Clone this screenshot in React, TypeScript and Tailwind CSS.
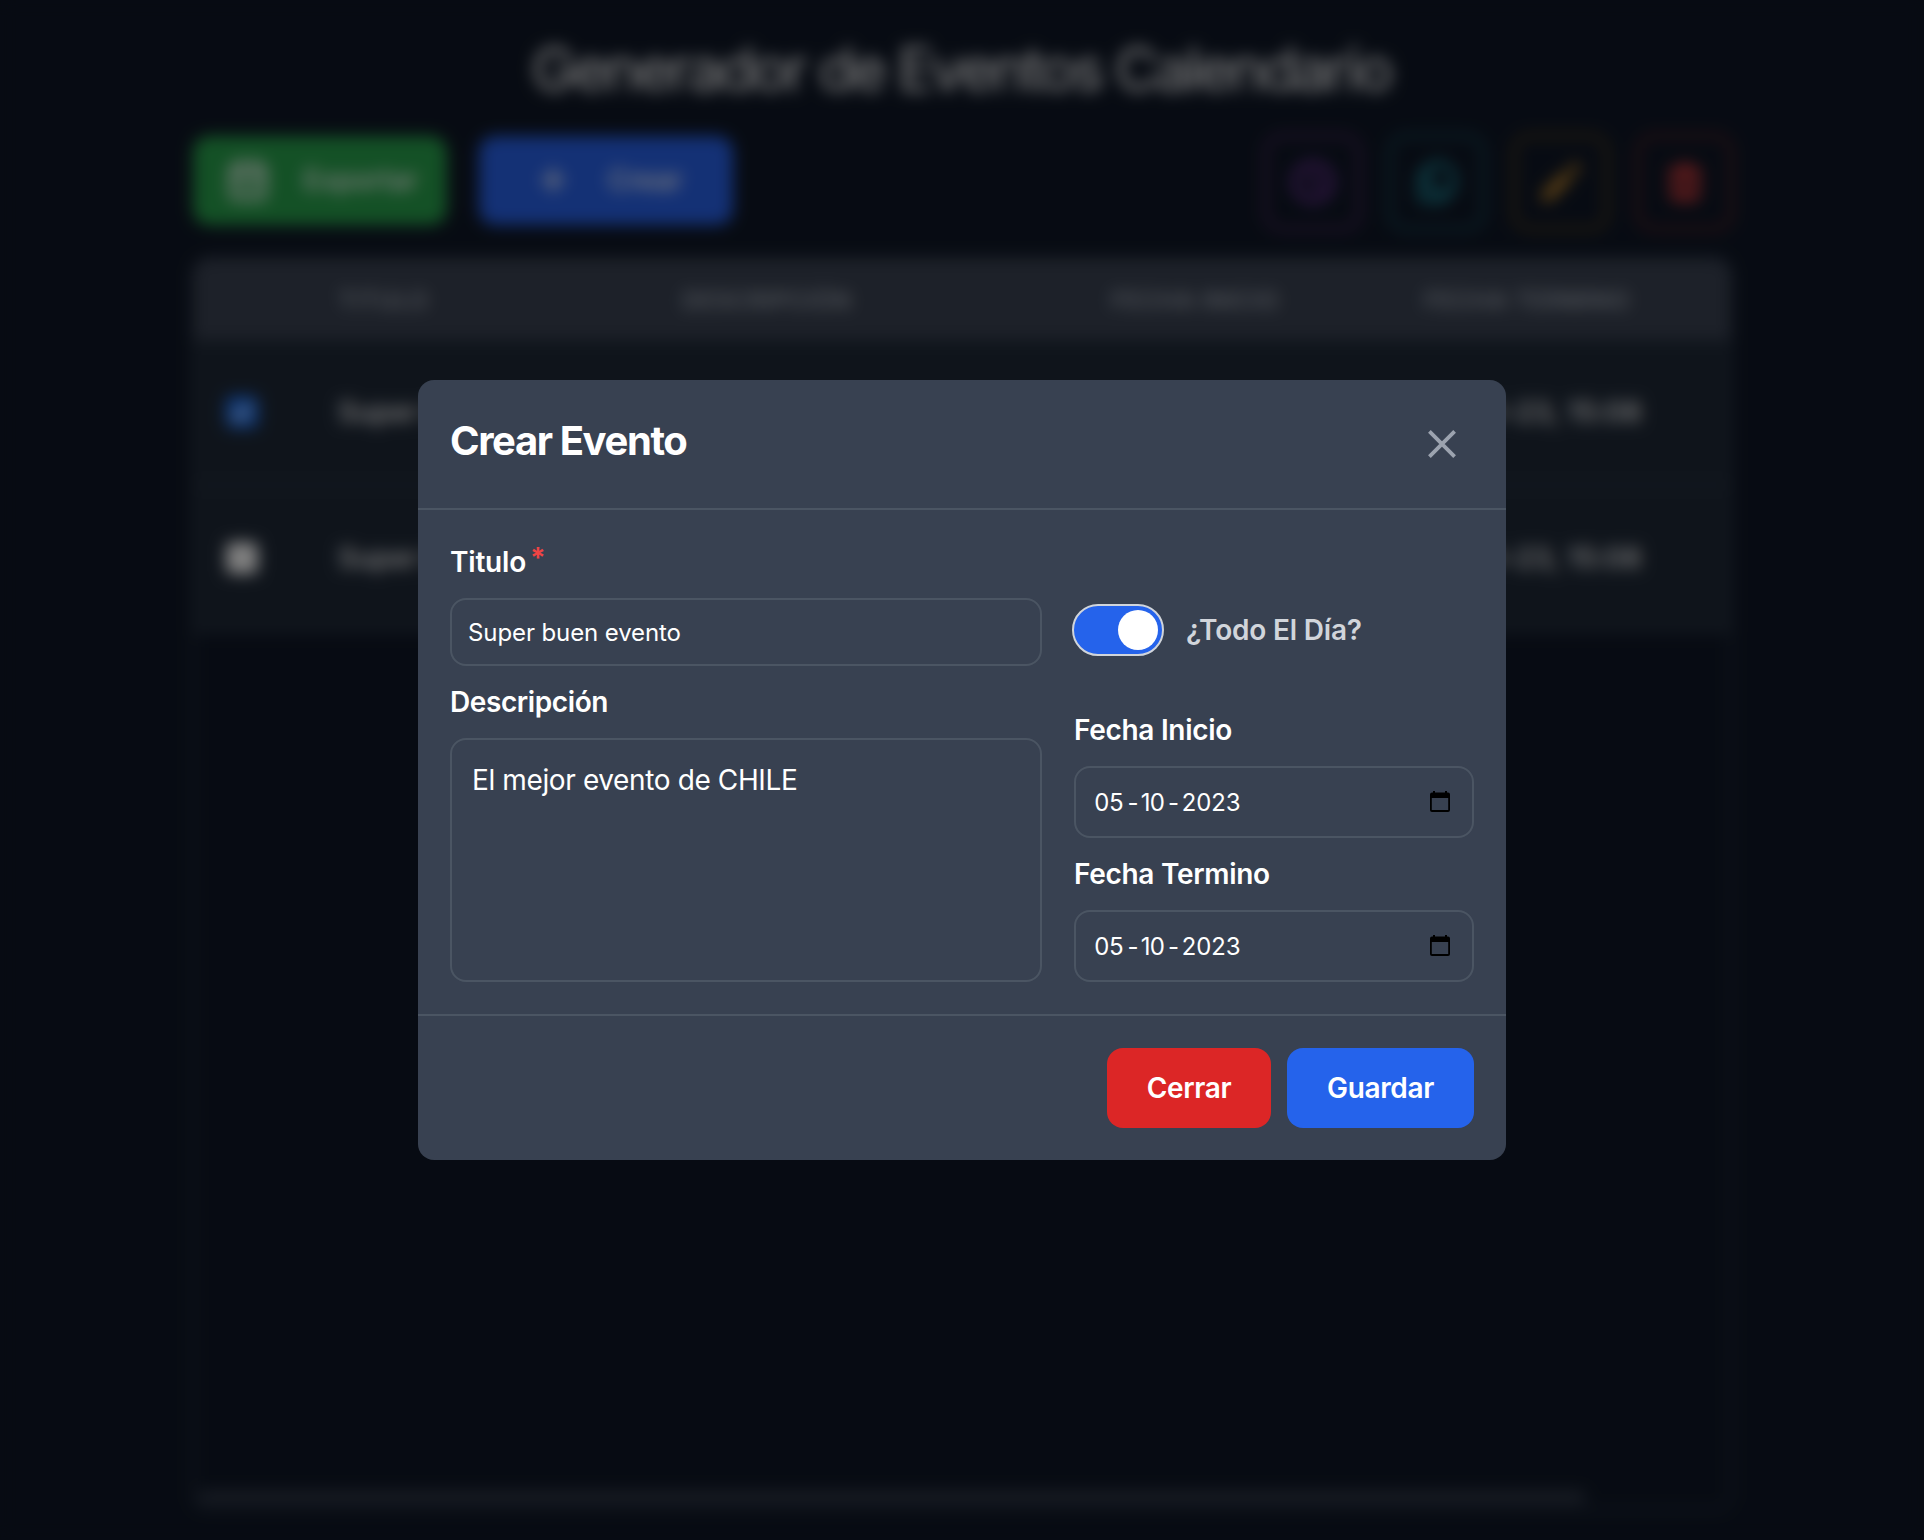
import React from "react";
import { CalendarDays, Plus } from "lucide-react";
import { HiOutlineClock, HiOutlineDocumentDuplicate, HiPencil, HiTrash } from "react-icons/hi";

const rows = [
  { checked: true, title: "Super buen evento", description: "El mejor evento de CHILE", start: "05-10-23, 15:08", end: "05-10-23, 15:08" },
  { checked: false, title: "Super buen evento", description: "El mejor evento de CHILE", start: "05-10-23, 15:08", end: "05-10-23, 15:08" },
];

const columns = "grid grid-cols-[144px_344px_429px_313px_1fr] items-center";

function IconButton({ className, children }: { className: string; children: React.ReactNode }) {
  return (
    <button className={`flex h-[95px] w-[95px] items-center justify-center rounded-2xl border-2 ${className}`}>
      {children}
    </button>
  );
}

function EventsPage() {
  return (
    <div className="flex h-[1540px] flex-col px-[192px]">
      <h1 className="mt-[33px] pr-[2px] text-center text-[60px] leading-[72px] font-[430] tracking-[-3.15px] text-white">
        Generador de Eventos Calendario
      </h1>
      <div className="mt-[28px] flex h-[98px] items-center justify-between">
        <div className="ml-px flex gap-8 pb-1">
          <button className="flex h-[89px] w-[254px] items-center justify-between rounded-2xl bg-[#28a24c] pr-[29px] pl-[33px] text-[28px] font-medium text-white">
            <CalendarDays className="h-11 w-11" strokeWidth={2.4} />
            <span>Exportar</span>
          </button>
          <button className="flex h-[89px] w-[254px] items-center rounded-2xl bg-[#2862eb] pl-14 text-[28px] font-medium text-white">
            <Plus className="h-9 w-9" strokeWidth={2.6} />
            <span className="ml-[37px]">Crear</span>
          </button>
        </div>
        <div className="flex gap-[29px]">
          <IconButton className="border-[#96389c] text-[#983cc8]">
            <HiOutlineClock className="h-[50px] w-[50px]" />
          </IconButton>
          <IconButton className="border-[#1c8494] text-[#20a4b4]">
            <HiOutlineDocumentDuplicate className="h-[50px] w-[50px]" />
          </IconButton>
          <IconButton className="border-[#a9731c] text-[#c98a2a]">
            <HiPencil className="h-[54px] w-[54px]" />
          </IconButton>
          <IconButton className="border-[#b83234] text-[#cf3a3a]">
            <HiTrash className="h-12 w-12" />
          </IconButton>
        </div>
      </div>
      <div className="mt-[26px] flex h-[1254px] flex-col justify-between rounded-2xl border-2 border-[#374151]">
        <div>
          <div className={`${columns} h-[81px] rounded-t-2xl bg-[#3a4252] pt-0.5 text-[24px] font-semibold tracking-[0.5px] text-[#9ca3af]`}>
            <span />
            <span>TITULO</span>
            <span>DESCRIPCIÓN</span>
            <span>FECHA INICIO</span>
            <span>FECHA TERMINO</span>
          </div>
          {rows.map((row, i) => (
            <div key={i} className={`${columns} h-[146px] border-b-2 border-[#374151] bg-[#1f2937] text-[28px] font-medium tracking-[0.3px] text-white`}>
              <span className={`ml-8 flex h-8 w-8 items-center justify-center rounded-md ${row.checked ? "bg-[#1f70ec]" : "bg-white"}`}>
                {row.checked && (
                  <svg viewBox="0 0 16 16" className="h-8 w-8" fill="none" stroke="white" strokeWidth="2">
                    <path d="M4 8.5l2.5 2.5L12 5" />
                  </svg>
                )}
              </span>
              <span>{row.title}</span>
              <span>{row.description}</span>
              <span>{row.start}</span>
              <span>{row.end}</span>
            </div>
          ))}
        </div>
        <div className="mb-1.5 ml-1 h-3 w-[1388px] rounded-full bg-[#333b4a]" />
      </div>
    </div>
  );
}

function DateField({ label }: { label: string }) {
  return (
    <div>
      <label className="block text-[28px] leading-[40px] font-[560] tracking-[-0.3px]">{label}</label>
      <div className="mt-4 flex h-[72px] items-center justify-between rounded-2xl border-2 border-[#4b5563] pr-[22px] pl-[18px] text-[24px] font-[430]">
        <span className="flex pt-0.5 tracking-[-0.8px]">
          <span className="tabular-nums">05</span>
          <span className="pr-[3px] pl-[4px]">-</span>
          <span>10</span>
          <span className="pr-[3px] pl-[4px]">-</span>
          <span className="tabular-nums">2023</span>
        </span>
        <svg viewBox="0 0 20 21" className="-mt-px h-[21px] w-5" fill="black">
          <path fillRule="evenodd" d="M3 0h2v1.5h10V0h2v1.5h1a2 2 0 0 1 2 2v15.500a2 2 0 0 1-2 2H2a2 2 0 0 1-2-2V3.500a2 2 0 0 1 2-2h1zM1.800 7v12h16.400V7z" />
        </svg>
      </div>
    </div>
  );
}

function CreateEventModal() {
  return (
    <div className="w-[1088px] rounded-2xl bg-[#384151] text-white">
      <header className="flex h-[130px] items-start justify-between border-b-2 border-[#4b5563] p-8">
        <h3 className="pt-px text-[40px] leading-[56px] font-[670] tracking-[-1.4px]">Crear Evento</h3>
        <button className="flex h-16 w-16 items-center justify-center text-[#9ca3af]">
          <svg viewBox="0 0 28 28" className="h-7 w-7" fill="none" stroke="currentColor" strokeWidth="3.8">
            <path d="M1.4 1.4l25.200 25.200M26.600 1.400L1.400 26.600" />
          </svg>
        </button>
      </header>
      <div className="flex gap-8 p-8">
        <div className="w-[592px]">
          <label className="flex text-[28px] leading-[40px] font-[560] tracking-[-0.2px]">
            <span>Titulo</span>
            <span className="-mt-1 ml-1 font-bold text-[#ef4444]">*</span>
          </label>
          <div className="mt-4 h-[68px] rounded-2xl border-2 border-[#4b5563] px-4 pt-[17px] text-[24px] leading-[32px] font-[430] tracking-[-0.1px]">
            Super buen evento
          </div>
          <label className="mt-4 block text-[28px] leading-[40px] font-[560] tracking-[-0.4px]">Descripción</label>
          <div className="mt-4 h-[244px] rounded-2xl border-2 border-[#4b5563] p-5 text-[28px] leading-[40px] font-[430] tracking-[-0.38px]">
            El mejor evento de CHILE
          </div>
        </div>
        <div className="flex w-[400px] flex-col justify-between">
          <div className="mt-[62px] -ml-0.5 flex items-center">
            <div className="flex h-[52px] w-[92px] items-center justify-end rounded-full border-2 border-[#d1d5db] bg-[#2563eb] pr-1">
              <span className="h-10 w-10 rounded-full bg-white" />
            </div>
            <span className="ml-[22px] text-[28px] leading-[40px] font-[560] tracking-[-0.2px] text-[#d1d5db]">¿Todo El Día?</span>
          </div>
          <div className="flex flex-col gap-4">
            <DateField label="Fecha Inicio" />
            <DateField label="Fecha Termino" />
          </div>
        </div>
      </div>
      <footer className="flex justify-end gap-4 border-t-2 border-[#4b5563] p-8 text-[28px] font-[580] tracking-[-0.35px]">
        <button className="h-20 w-[164px] rounded-2xl bg-[#dc2626]">Cerrar</button>
        <button className="h-20 w-[187px] rounded-2xl bg-[#2563eb]">Guardar</button>
      </footer>
    </div>
  );
}

export default function App() {
  return (
    <div className="h-[1540px] w-[1924px] overflow-hidden bg-[#0f1726] font-['Inter',sans-serif]">
      <EventsPage />
      <div className="fixed inset-0 flex items-center justify-center bg-black/50 backdrop-blur-[8px]">
        <CreateEventModal />
      </div>
    </div>
  );
}
